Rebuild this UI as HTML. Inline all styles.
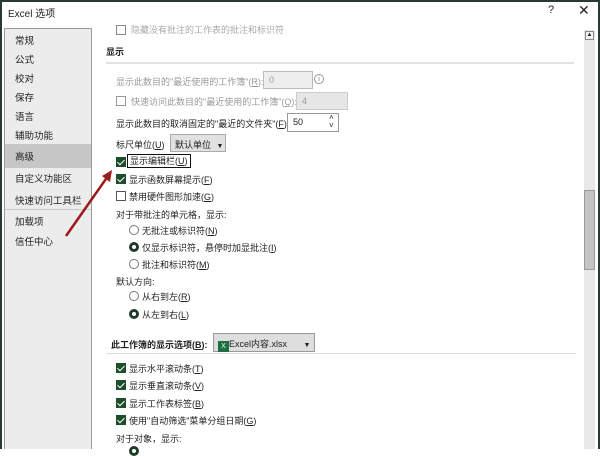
<!DOCTYPE html>
<html><head><meta charset="utf-8"><style>
*{margin:0;padding:0;box-sizing:border-box}
body{width:600px;height:449px;overflow:hidden;background:#fff;font-family:"Liberation Sans","Noto Sans CJK SC",sans-serif;font-size:9px;color:#222;position:relative}
.a{position:absolute;white-space:nowrap}
.nav{position:absolute;left:4px;top:28px;width:88px;height:421px;background:#ececec;border:1px solid #9a9a9a;border-bottom:none;font-size:9.5px}
.nav div{position:absolute;left:10px}
.cb{position:absolute;width:10px;height:10px;border:1px solid #555;background:#fff}
.cb.on{background:#1e4d2b;border-color:#1e4d2b}
.cb.on:after{content:"";position:absolute;left:2px;top:0px;width:3px;height:6px;border:solid #fff;border-width:0 1.5px 1.5px 0;transform:rotate(45deg)}
.rd{position:absolute;width:10px;height:10px;border:1px solid #777;border-radius:50%;background:#fff}
.rd.on{border:3px solid #1e3a28}
.g{color:#999}
</style></head><body>
<div class="a" style="left:0;top:0;width:600px;height:2px;background:#2a3a33"></div>
<div class="a" style="left:0;top:0;width:2px;height:449px;background:#2a3a33"></div>
<div class="a" style="left:598px;top:0;width:2px;height:449px;background:#2a3a33"></div>
<div class="a" style="left:8px;top:5px;font-size:10px">Excel 选项</div>
<div class="a" style="left:548px;top:4px;font-size:11px">?</div>
<div class="a" style="left:578px;top:2px;font-size:14px">✕</div>
<div class="nav">
<div style="top:4px">常规</div>
<div style="top:23px">公式</div>
<div style="top:42px">校对</div>
<div style="top:61px">保存</div>
<div style="top:80px">语言</div>
<div style="top:99px">辅助功能</div>
<div style="left:0;top:115px;width:86px;height:24px;background:#c6c6c6"></div>
<div style="top:120px">高级</div>
<div style="top:142px">自定义功能区</div>
<div style="top:164px">快速访问工具栏</div>
<div style="left:0;top:180px;width:86px;height:1px;background:#c8c8c8"></div>
<div style="top:185px">加载项</div>
<div style="top:205px">信任中心</div>
</div>
<div class="cb" style="left:116px;top:25px;border-color:#888"></div>
<div class="a g" style="left:131px;top:23px;color:#aaa">隐藏没有批注的工作表的批注和标识符</div>
<div class="a" style="left:106px;top:45px;font-weight:bold">显示</div>
<div class="a" style="left:106px;top:62px;width:468px;height:2px;background:#e2e2e2"></div>
<div class="a g" style="left:116px;top:75px">显示此数目的"最近使用的工作簿"(<u>R</u>):</div>
<div class="a" style="left:263px;top:71px;width:50px;height:18px;background:#eee;border:1px solid #bbb;color:#999;padding:3px 5px">0</div>
<div class="a" style="left:314px;top:74px;width:10px;height:10px;border:1px solid #999;border-radius:50%;font-size:7px;text-align:center;color:#777;line-height:9px">i</div>
<div class="cb" style="left:116px;top:96px;border-color:#999"></div>
<div class="a g" style="left:131px;top:95px">快速访问此数目的"最近使用的工作簿"(<u>Q</u>):</div>
<div class="a" style="left:296px;top:92px;width:52px;height:18px;background:#e6e6e6;border:1px solid #ccc;color:#999;padding:3px 5px">4</div>
<div class="a" style="left:116px;top:117px">显示此数目的取消固定的"最近的文件夹"(<u>F</u>):</div>
<div class="a" style="left:287px;top:113px;width:52px;height:19px;border:1px solid #999;padding:3px 5px;background:#fff">50</div>
<div class="a" style="left:329px;top:114px;font-size:8px;line-height:8px">˄<br>˅</div>
<div class="a" style="left:116px;top:138px">标尺单位(<u>U</u>)</div>
<div class="a" style="left:170px;top:134px;width:56px;height:18px;background:#e1e1e1;border:1px solid #aaa;padding:3px 4px">默认单位 <span style="font-size:7px;margin-left:3px">▼</span></div>
<div class="cb on" style="left:116px;top:157px"></div>
<div class="a" style="left:127px;top:154px;border:1.5px solid #111;padding:0 2px;height:14px;line-height:12px">显示编辑栏(<u>U</u>)</div>
<div class="cb on" style="left:116px;top:174px"></div>
<div class="a" style="left:129px;top:173px">显示函数屏幕提示(<u>F</u>)</div>
<div class="cb" style="left:116px;top:191px"></div>
<div class="a" style="left:129px;top:190px">禁用硬件图形加速(<u>G</u>)</div>
<div class="a" style="left:116px;top:208px">对于带批注的单元格，显示:</div>
<div class="rd" style="left:129px;top:225px"></div>
<div class="a" style="left:142px;top:224px">无批注或标识符(<u>N</u>)</div>
<div class="rd on" style="left:129px;top:242px"></div>
<div class="a" style="left:142px;top:241px">仅显示标识符，悬停时加显批注(<u>I</u>)</div>
<div class="rd" style="left:129px;top:259px"></div>
<div class="a" style="left:142px;top:258px">批注和标识符(<u>M</u>)</div>
<div class="a" style="left:116px;top:275px">默认方向:</div>
<div class="rd" style="left:129px;top:291px"></div>
<div class="a" style="left:142px;top:290px">从右到左(<u>R</u>)</div>
<div class="rd on" style="left:129px;top:309px"></div>
<div class="a" style="left:142px;top:308px">从左到右(<u>L</u>)</div>
<div class="a" style="left:111px;top:338px;font-weight:bold">此工作簿的显示选项(<u>B</u>):</div>
<div class="a" style="left:213px;top:333px;width:102px;height:19px;background:#dedede;border:1px solid #999;padding:3px 4px"><span style="display:inline-block;width:11px;height:11px;background:#1d6f42;color:#fff;font-size:7px;text-align:center;line-height:11px;vertical-align:-1px">X</span>Excel内容.xlsx <span style="font-size:7px;margin-left:14px">▼</span></div>
<div class="a" style="left:106px;top:353px;width:470px;height:1px;background:#ddd"></div>
<div class="cb on" style="left:116px;top:363px"></div>
<div class="a" style="left:129px;top:362px">显示水平滚动条(<u>T</u>)</div>
<div class="cb on" style="left:116px;top:380px"></div>
<div class="a" style="left:129px;top:379px">显示垂直滚动条(<u>V</u>)</div>
<div class="cb on" style="left:116px;top:398px"></div>
<div class="a" style="left:129px;top:397px">显示工作表标签(<u>B</u>)</div>
<div class="cb on" style="left:116px;top:415px"></div>
<div class="a" style="left:129px;top:414px">使用"自动筛选"菜单分组日期(<u>G</u>)</div>
<div class="a" style="left:116px;top:432px">对于对象，显示:</div>
<div class="rd on" style="left:129px;top:446px"></div>
<div class="a" style="left:584px;top:30px;width:11px;height:419px;background:#e8e8e8"></div>
<div class="a" style="left:585px;top:31px;width:9px;height:9px;border:1px solid #888;background:#f4f4f4;font-size:6px;text-align:center;line-height:7px">▲</div>
<div class="a" style="left:584px;top:190px;width:11px;height:80px;background:#c4c4c4;border:1px solid #999"></div>
<svg class="a" style="left:0;top:0" width="600" height="449"><line x1="66" y1="236" x2="108" y2="176" stroke="#9c1a1a" stroke-width="2.5"/><polygon points="112,170 102,176 110,182" fill="#9c1a1a"/></svg>
</body></html>
